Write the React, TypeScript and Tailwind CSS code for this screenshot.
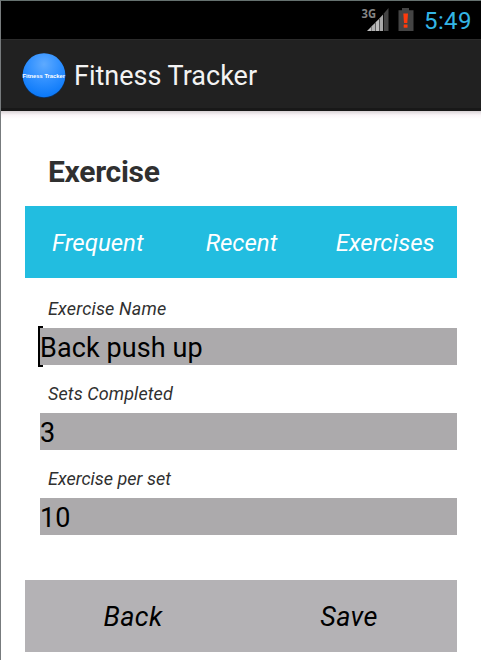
function StatusBar() {
  return (
    <div className="flex h-[38px] items-center justify-end bg-black pr-[10px]">
      <svg className="mr-px h-[38px] w-[64px]" viewBox="0 0 64 38">
        <text x="2.500" y="17" fontSize="12.500" fontWeight="700" fill="#858585" fontFamily="Open Sans, sans-serif" textLength="14.500" lengthAdjust="spacingAndGlyphs">3G</text>
        <path d="M8 30L12 26V30Z" fill="#c0c0c0" />
        <path d="M12.300 30V25.500L16 22V30Z" fill="#b0b0b0" />
        <path d="M16.500 30V21.300L20 18V30Z" fill="#bdbdbd" />
        <path d="M20.500 30V17.300L24 13.600V30Z" fill="#a9a9a9" />
        <path d="M24.800 30V12.500L29.500 7V30Z" fill="#444" />
        <path d="M43 7H50V9.200H54.500V30H39.500V9.200H43Z" fill="#444" />
        <path d="M44.300 12.500H49L48.300 22H45Z" fill="#ff3a0c" />
        <rect x="44.700" y="23.500" width="3.800" height="3.200" fill="#ff3a0c" />
      </svg>
      <span className="w-[47px] whitespace-nowrap pt-[2px] text-[24px] leading-[38px] tracking-[0.4px] text-[#33b5e5]">5:49</span>
    </div>
  );
}

function ActionBar() {
  return (
    <header className="flex h-[72px] items-center border-t border-b-[3px] border-t-[#2b2b2b] border-b-[#181818] bg-[#212121] pl-[21px]">
      <svg className="mt-px h-[46px] w-[46px]" viewBox="0 0 46 46">
        <defs>
          <radialGradient id="ball" cx="50%" cy="25%" r="75%">
            <stop offset="0" stopColor="#5eaaff" />
            <stop offset="0.5" stopColor="#3090ff" />
            <stop offset="1" stopColor="#0a78f8" />
          </radialGradient>
        </defs>
        <ellipse cx="22" cy="23.800" rx="21.500" ry="22.300" fill="#0c2f5c" />
        <ellipse cx="22" cy="23.200" rx="21.300" ry="22" fill="url(#ball)" />
        <text x="0.500" y="26" fontSize="6" fontWeight="700" fill="#fff" fontFamily="Liberation Sans, sans-serif" textLength="42.500" lengthAdjust="spacingAndGlyphs">Fitness Tracker</text>
      </svg>
      <h1 className="ml-[6px] mt-[4px] whitespace-nowrap text-[27px] leading-[36px] text-[#f3f3f3]">Fitness Tracker</h1>
    </header>
  );
}

function Field({
  label,
  value,
  focused = false,
  labelSpacing = "",
}: {
  label: string;
  value: string;
  focused?: boolean;
  labelSpacing?: string;
}) {
  return (
    <div className="flex h-[85px] flex-col">
      <label className="flex h-[37px] items-center pl-[23px] pb-[1px] text-[18px] italic leading-[36px] text-[#303030]">
        <span className={`whitespace-nowrap ${labelSpacing}`}>{label}</span>
      </label>
      <div className="relative ml-[15px] h-[37px] bg-[#acaaac]">
        {focused && <i className="absolute -left-[2px] -top-[2px] h-[41px] w-[5px] border-y-2 border-l-2 border-black" />}
        <span className="block whitespace-nowrap text-[27px] leading-[41px] tracking-[0.1px] text-black">{value}</span>
      </div>
    </div>
  );
}

export default function App() {
  return (
    <div className="h-[660px] w-[481px] overflow-hidden border-l border-t border-l-[#777b7d] border-t-[#65716f] bg-white font-[Roboto,sans-serif]">
      <StatusBar />
      <ActionBar />
      <div className="h-[8px] bg-linear-to-b from-[#d8d2d5] via-[#faf5f8] to-white" />
      <main className="ml-[24px] w-[432px]">
        <h2 className="h-[87px] pl-[23px] pt-[34px] text-[30px] font-bold leading-[38px] tracking-[-0.3px] text-[#303030]">Exercise</h2>
        <nav className="grid h-[72px] grid-cols-3 bg-[#22bde0] pl-px text-center text-[24px] italic leading-[74px] text-white">
          <span>Frequent</span>
          <span>Recent</span>
          <span>Exercises</span>
        </nav>
        <form className="pt-[13px]">
          <Field label="Exercise Name" value="Back push up" labelSpacing="tracking-[0.18px]" focused />
          <Field label="Sets Completed" value="3" labelSpacing="tracking-[0.1px]" />
          <Field label="Exercise per set" value="10" />
        </form>
        <div className="mt-[34px] grid h-[72px] grid-cols-2 bg-[#b4b2b5] text-center text-[27px] italic leading-[74px] tracking-[0.4px] text-black">
          <span>Back</span>
          <span>Save</span>
        </div>
      </main>
    </div>
  );
}
